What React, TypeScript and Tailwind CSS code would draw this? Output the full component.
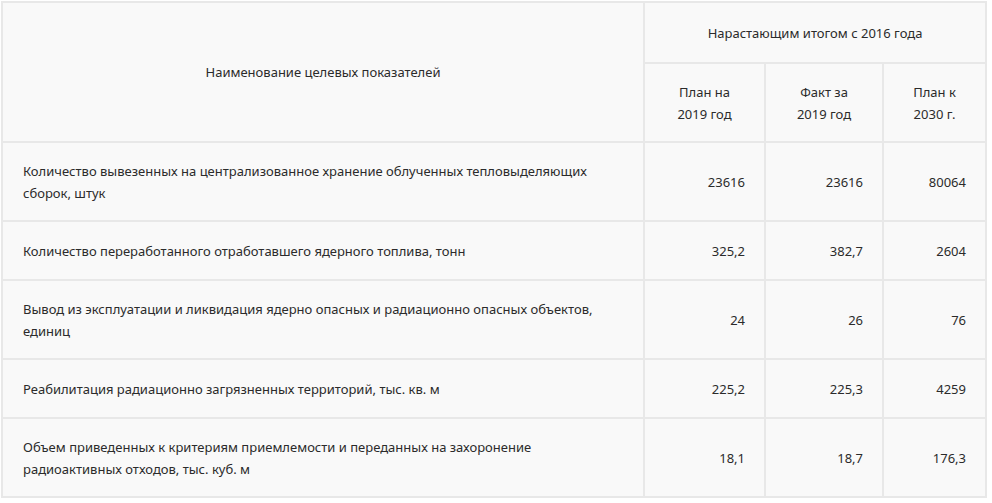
import React from "react";

const rows: [string, string, string, string][] = [
  [
    "Количество вывезенных на централизованное хранение облученных тепловыделяющих сборок, штук",
    "23616",
    "23616",
    "80064",
  ],
  ["Количество переработанного отработавшего ядерного топлива, тонн", "325,2", "382,7", "2604"],
  [
    "Вывод из эксплуатации и ликвидация ядерно опасных и радиационно опасных объектов, единиц",
    "24",
    "26",
    "76",
  ],
  ["Реабилитация радиационно загрязненных территорий, тыс. кв. м", "225,2", "225,3", "4259"],
  [
    "Объем приведенных к критериям приемлемости и переданных на захоронение радиоактивных отходов, тыс. куб. м",
    "18,1",
    "18,7",
    "176,3",
  ],
];

export default function App() {
  const font = { fontFamily: '"Noto Sans", "Open Sans", sans-serif' };
  return (
    <div className="w-[992px] h-[503px] bg-white pl-[1px] pt-[1px]" style={font}>
      <table className="w-[986px] table-fixed border-collapse bg-[#f9f9f9] text-[13px] leading-[22px] text-[#2b2b2b]">
        <colgroup>
          <col className="w-[642px]" />
          <col className="w-[121px]" />
          <col className="w-[118px]" />
          <col />
        </colgroup>
        <thead>
          <tr className="h-[61px]">
            <th
              rowSpan={2}
              className="border-2 border-[#e8e8e8] px-5 font-normal text-center align-middle"
            >
              Наименование целевых показателей
            </th>
            <th
              colSpan={3}
              className="border-2 border-[#e8e8e8] px-5 py-[17px] font-normal text-center"
            >
              Нарастающим итогом с 2016 года
            </th>
          </tr>
          <tr className="h-[79px]">
            <th className="border-2 border-[#e8e8e8] px-4 py-[16px] font-normal text-center">
              План на
              <br />
              2019 год
            </th>
            <th className="border-2 border-[#e8e8e8] px-4 py-[16px] font-normal text-center">
              Факт за
              <br />
              2019 год
            </th>
            <th className="border-2 border-[#e8e8e8] px-4 py-[16px] font-normal text-center">
              План к
              <br />
              2030 г.
            </th>
          </tr>
        </thead>
        <tbody>
          {rows.map((r, i) => (
            <tr key={i} className="h-[59px]">
              <td className="border-2 border-[#e8e8e8] pl-5 pr-8 pt-[17px] pb-[16px] align-middle">{r[0]}</td>
              <td className="border-2 border-[#e8e8e8] pl-4 pr-[19px] text-right align-middle">{r[1]}</td>
              <td className="border-2 border-[#e8e8e8] pl-4 pr-[19px] text-right align-middle">{r[2]}</td>
              <td className="border-2 border-[#e8e8e8] pl-4 pr-[19px] text-right align-middle">{r[3]}</td>
            </tr>
          ))}
        </tbody>
      </table>
    </div>
  );
}
